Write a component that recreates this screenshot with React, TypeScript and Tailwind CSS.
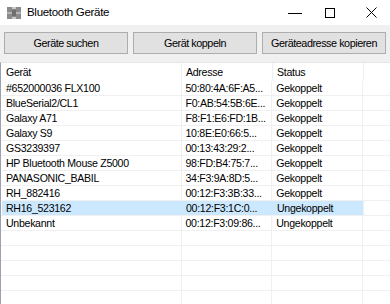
import React from "react";

const rows: [string, string, string][] = [
  ["#652000036 FLX100", "50:80:4A:6F:A5...", "Gekoppelt"],
  ["BlueSerial2/CL1", "F0:AB:54:5B:6E...", "Gekoppelt"],
  ["Galaxy A71", "F8:F1:E6:FD:1B...", "Gekoppelt"],
  ["Galaxy S9", "10:8E:E0:66:5...", "Gekoppelt"],
  ["GS3239397", "00:13:43:29:2...", "Gekoppelt"],
  ["HP Bluetooth Mouse Z5000", "98:FD:B4:75:7...", "Gekoppelt"],
  ["PANASONIC_BABIL", "34:F3:9A:8D:5...", "Gekoppelt"],
  ["RH_882416", "00:12:F3:3B:33...", "Gekoppelt"],
  ["RH16_523162", "00:12:F3:1C:0...", "Ungekoppelt"],
  ["Unbekannt", "00:12:F3:09:86...", "Ungekoppelt"],
  ["", "", ""],
  ["", "", ""],
  ["", "", ""],
  ["", "", ""],
  ["", "", ""],
];

function AppIcon() {
  return (
    <svg width="14" height="12" viewBox="0 0 14 12">
      <rect x="0" y="0" width="14" height="12" fill="#8a8a8a" />
      <rect x="5" y="0" width="4" height="2" fill="#c8c8c8" />
      <rect x="5" y="10" width="4" height="2" fill="#c8c8c8" />
      <rect x="0" y="5" width="14" height="2" fill="#b4b4b4" />
      <rect x="5" y="3" width="4" height="6" fill="#6e6e6e" />
    </svg>
  );
}

export default function App() {
  const font = { fontFamily: '"Liberation Sans", Arial, sans-serif' };
  return (
    <div className="w-[390px] h-[304px] bg-white overflow-hidden flex flex-col text-black" style={font}>
      {/* title bar */}
      <div className="h-[25px] flex items-center shrink-0">
        <div className="ml-[7px] mt-[1px]">
          <AppIcon />
        </div>
        <span className="ml-[6px] text-[11.5px] leading-none tracking-[-0.3px]">Bluetooth Geräte</span>
        <div className="ml-auto flex items-center h-full">
          <div className="w-[26px] h-full flex items-center justify-center">
            <div className="w-[14px] h-px bg-black mt-[1px]" />
          </div>
          <div className="w-[44px] h-full flex items-center justify-center">
            <div className="w-[10px] h-[10px] border border-black" />
          </div>
          <div className="w-[38px] h-full flex items-center justify-center">
            <svg width="11" height="11" viewBox="0 0 11 11">
              <path d="M0.5 0.5 L10.5 10.5 M10.5 0.5 L0.5 10.5" stroke="#000" strokeWidth="1" />
            </svg>
          </div>
        </div>
      </div>
      {/* toolbar */}
      <div className="h-[37px] shrink-0 bg-[#f0f0f0] grid grid-cols-3 gap-[5px] px-[4px] pt-[7px]">
        {["Geräte suchen", "Gerät koppeln", "Geräteadresse kopieren"].map((t) => (
          <div
            key={t}
            className="h-[22px] border border-[#adadad] bg-[#e1e1e1] flex items-center justify-center text-[10.8px] leading-none tracking-[-0.45px] whitespace-nowrap"
          >
            {t}
          </div>
        ))}
      </div>
      {/* table */}
      <div className="flex-1 border-l border-t border-[#9aa0ad] border-t-[#e6e6e6] text-[10.6px] leading-none tracking-[-0.3px]">
        <div className="flex h-[18px]">
          <div className="w-[181px] border-r border-[#f0f0f0] pl-[5px] flex items-center">Gerät</div>
          <div className="w-[91px] border-r border-[#f0f0f0] pl-[4px] flex items-center">Adresse</div>
          <div className="w-[91px] border-r border-[#f0f0f0] pl-[4px] flex items-center">Status</div>
          <div className="flex-1" />
        </div>
        {rows.map((r, i) => {
          const sel = i === 8;
          return (
            <div key={i} className="flex h-[15px] border-b border-[#f0f0f0]">
              <div className={`w-[362px] flex ${sel ? "bg-[#cce8ff] ml-[1px]" : ""}`}>
                <div className={`${sel ? "w-[180px] pl-[4px] border-[#cce8ff]" : "w-[181px] pl-[5px] border-[#f0f0f0]"} border-r flex items-center whitespace-nowrap`}>{r[0]}</div>
                <div className={`w-[91px] border-r ${sel ? "border-[#cce8ff]" : "border-[#f0f0f0]"} pl-[4px] flex items-center whitespace-nowrap`}>{r[1]}</div>
                <div className="w-[91px] border-r border-[#f0f0f0] pl-[4px] flex items-center whitespace-nowrap">{r[2]}</div>
              </div>
              <div className="flex-1" />
            </div>
          );
        })}
      </div>
    </div>
  );
}
